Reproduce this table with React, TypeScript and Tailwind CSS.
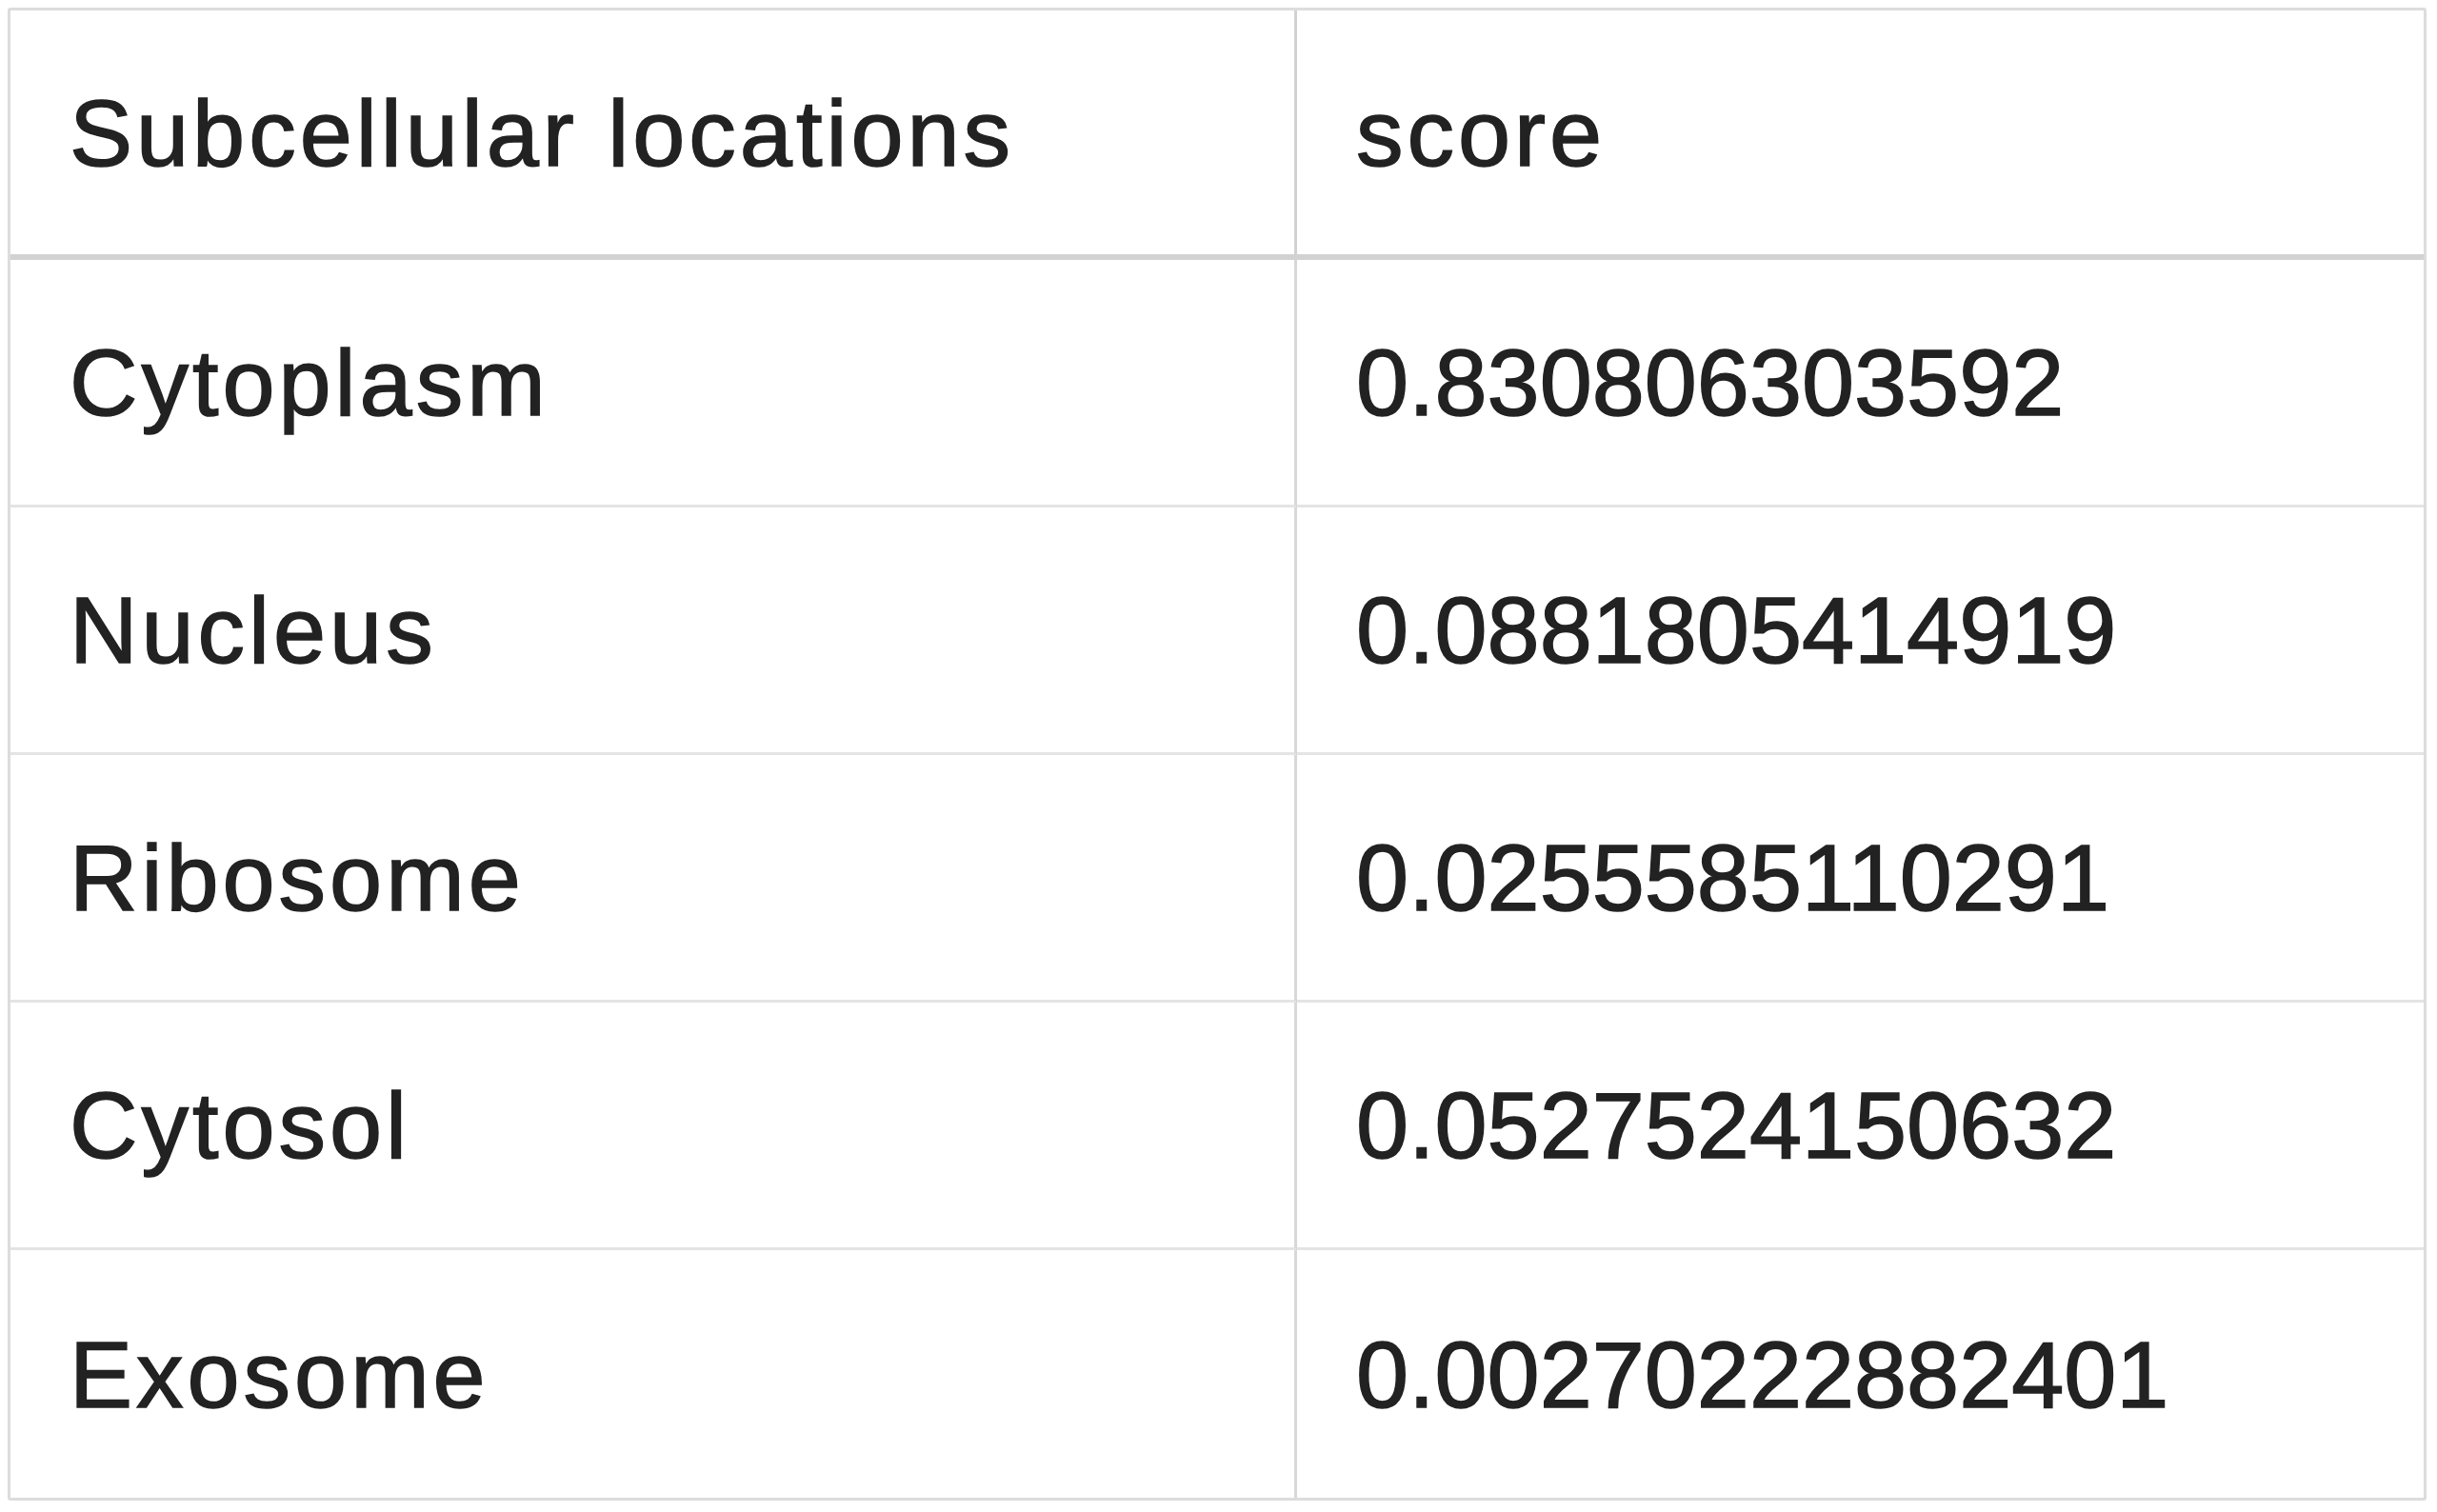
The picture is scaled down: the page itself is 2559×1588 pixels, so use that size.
import React from "react";

const rows: [string, string][] = [
  ["Cytoplasm", "0.830806303592"],
  ["Nucleus", "0.0881805414919"],
  ["Ribosome", "0.0255585110291"],
  ["Cytosol", "0.0527524150632"],
  ["Exosome", "0.00270222882401"],
];

const App: React.FC = () => {
  return (
    <div className="min-h-screen bg-white p-2 text-[#222] font-['Liberation_Sans',Arial,sans-serif] [-webkit-text-stroke:1.5px_#222]">
      <table className="w-[2540px] table-fixed border-separate border-spacing-0 rounded-[3px] border-[3px] border-[#dcdcdc] text-[99px] leading-none">
        <colgroup>
          <col className="w-[1351px]" />
          <col />
        </colgroup>
        <thead>
          <tr className="h-[262px]">
            <th className="border-b-[6px] border-r-[3px] border-[#d2d2d2] px-[62px] text-left font-normal tracking-[4px]">
              Subcellular locations
            </th>
            <th className="border-b-[6px] border-[#d2d2d2] px-[62px] text-left font-normal tracking-[4px]">
              score
            </th>
          </tr>
        </thead>
        <tbody>
          {rows.map(([loc, score], i) => (
            <tr key={loc} className="h-[260px]">
              <td
                className={`border-r-[3px] border-[#d8d8d8] px-[62px] tracking-[4px] ${
                  i < rows.length - 1 ? "border-b-[3px] border-b-[#e4e4e4]" : ""
                }`}
              >
                {loc}
              </td>
              <td
                className={`px-[62px] ${
                  i < rows.length - 1 ? "border-b-[3px] border-b-[#e4e4e4]" : ""
                }`}
              >
                {score}
              </td>
            </tr>
          ))}
        </tbody>
      </table>
    </div>
  );
};

export default App;
